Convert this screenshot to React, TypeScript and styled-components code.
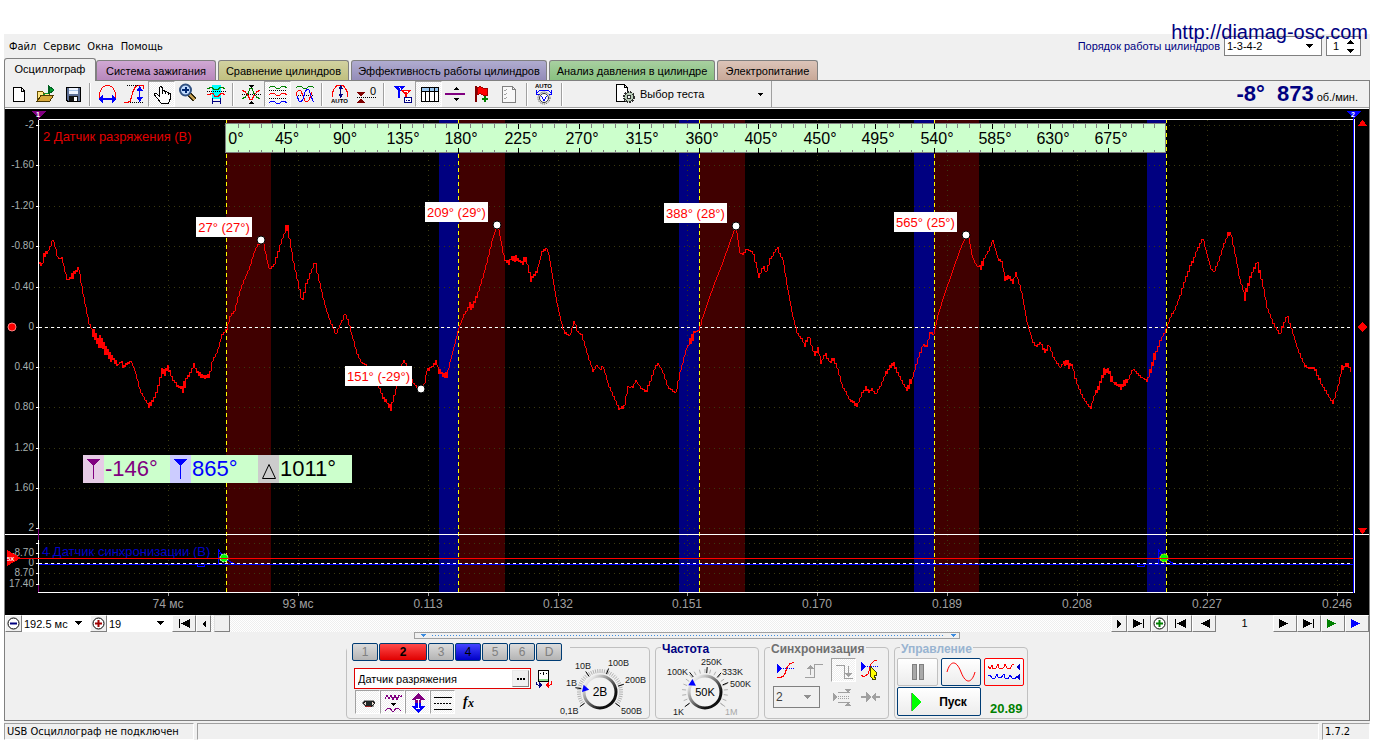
import React, { useState } from "react";
import styled, { createGlobalStyle, css } from "styled-components";

const UI_FONT = '"Liberation Sans", Arial, sans-serif';
const MENU_FONT = '"DejaVu Sans Condensed", "DejaVu Sans", sans-serif';

const GlobalStyle = createGlobalStyle`
  *, *::before, *::after { box-sizing: border-box; }
  body { margin: 0; background: #fff; font: 11px/14px ${UI_FONT}; color: #000; }
  button, input, select { font: inherit; color: inherit; margin: 0; padding: 0; }
  svg { display: block; }
`;

const checker = css`
  background: repeating-conic-gradient(#fff 0 25%, #eee 0 50%) 0 0 / 2px 2px;
`;

/* ---------- window frame ---------- */

const Page = styled.div`
  position: relative;
  padding: 34px 12px 3px 4px;
`;

const SiteLink = styled.a`
  position: absolute;
  top: 20px;
  right: 14px;
  font-size: 20px;
  line-height: 24px;
  color: #000080;
  text-decoration: none;
  z-index: 2;
`;

const Window = styled.main`
  background: #f0f0f0;
`;

const Header = styled.header`
  display: flex;
  justify-content: space-between;
  height: 24px;
`;

const Menu = styled.nav`
  display: flex;
  gap: 7px;
  padding: 6px 0 0 5px;
  font: 11px/14px ${MENU_FONT};
`;

const MenuItem = styled.button`
  border: 0;
  height: 14px;
  background: none;
`;

const OrderBar = styled.div`
  display: flex;
  gap: 4px;
  padding: 2px 9px 0 0;
  height: 22px;
`;

const OrderLabel = styled.label`
  color: #000080;
  padding-top: 3px;
`;

const Combo = styled.span<{ $w: number; $framed?: boolean; $disabled?: boolean }>`
  display: grid;
  grid-template-columns: 1fr 16px;
  align-items: center;
  width: ${(p) => p.$w}px;
  background: ${(p) => (p.$disabled ? "#f0f0f0" : "#fff")};
  border: ${(p) => (p.$framed ? "1px solid #808080" : "0")};
  select {
    grid-area: 1 / 1 / 2 / 3;
    width: 100%;
    height: 100%;
    padding-left: 2px;
    border: 0;
    background: none;
    appearance: none;
    opacity: 1;
  }
  svg {
    grid-area: 1 / 2;
    pointer-events: none;
  }
`;

const Spinner = styled.span`
  display: flex;
  width: 35px;
  background: #fff;
  border: 1px solid #808080;
  input {
    width: 14px;
    flex: 1;
    min-width: 0;
    border: 0;
    background: none;
    padding-left: 6px;
  }
`;

const SpinButtons = styled.span`
  display: flex;
  flex-direction: column;
  justify-content: center;
  gap: 5px;
  width: 18px;
  padding-left: 4px;
  button {
    border: 0;
    background: none;
    height: 5px;
  }
`;

/* ---------- tabs ---------- */

const Tabs = styled.div`
  display: flex;
  align-items: flex-end;
  gap: 2px;
  height: 22px;
`;

const Tab = styled.button<{ $bg: string; $w: number; $active?: boolean }>`
  width: ${(p) => p.$w}px;
  height: ${(p) => (p.$active ? 23 : 20)}px;
  margin: 0 ${(p) => (p.$active ? "-2px -1px 0" : "0 0")};
  padding-bottom: ${(p) => (p.$active ? 2 : 0)}px;
  border: 1px solid #808080;
  border-bottom: 0;
  border-radius: 3px 3px 0 0;
  background: ${(p) => p.$bg};
  white-space: nowrap;
  z-index: ${(p) => (p.$active ? 1 : 0)};
`;

const Body = styled.div`
  border: 1px solid #808080;
`;

/* ---------- toolbar ---------- */

const Toolbar = styled.div`
  display: flex;
  align-items: flex-start;
  height: 28px;
  border-bottom: 1px solid #fff;
  box-shadow: inset 0 -1px #a0a0a0;
`;

const ToolButton = styled.button<{ $pressed?: boolean }>`
  width: 27px;
  height: 26px;
  display: grid;
  place-items: center;
  border: 1px solid transparent;
  background: none;
  ${(p) =>
    p.$pressed &&
    css`
      ${checker}
      border-color: #a0a0a0 #fff #fff #a0a0a0;
    `}
`;

const Separator = styled.span`
  width: 8px;
  height: 26px;
  background: linear-gradient(#a0a0a0, #a0a0a0) 3px 2px / 1px 23px no-repeat,
    linear-gradient(#fff, #fff) 4px 2px / 1px 23px no-repeat;
`;

const TestButton = styled.button`
  display: flex;
  align-items: center;
  gap: 3px;
  width: 206px;
  height: 26px;
  padding: 0 8px 0 49px;
  border: 0;
  border-right: 1px solid #a0a0a0;
  background: none;
  svg:last-child {
    margin-left: auto;
  }
`;

const Readout = styled.output`
  display: flex;
  align-items: baseline;
  gap: 12px;
  margin-left: auto;
  padding-right: 11px;
  font: bold 22px/26px ${UI_FONT};
  color: #000080;
  small {
    margin-left: -9px;
    font: 11px/14px ${UI_FONT};
    color: #000;
  }
`;

/* ---------- chart ---------- */

const ChartSvg = styled.svg`
  width: 100%;
  background: #000;
  font-family: ${UI_FONT};
`;

/* ---------- navigation strip ---------- */

const Strip = styled.div`
  display: flex;
  height: 17px;
  background: #fff;
`;

const StripButton = styled.button<{ $w: number }>`
  width: ${(p) => p.$w}px;
  height: 17px;
  display: grid;
  place-items: center;
  border: 1px solid;
  border-color: #fff #808080 #808080 #fff;
  background: #f0f0f0;
`;

const Track = styled.div`
  ${checker}
  flex: 1;
  display: flex;
  padding-left: 3px;
`;

const Thumb = styled.div`
  width: 16px;
  border: 1px solid;
  border-color: #e0e0e0 #808080 #808080 #e0e0e0;
  background: #f0f0f0;
`;

const PageNumber = styled.span`
  width: 57px;
  background: #f0f0f0;
  text-align: center;
  line-height: 17px;
`;

/* ---------- control panel ---------- */

const Panel = styled.div`
  display: flex;
  flex-direction: column;
  align-items: center;
  height: 88px;
`;

const Splitter = styled.div`
  display: flex;
  align-items: center;
  gap: 6px;
  width: 40%;
  height: 7px;
  padding: 0 3px 0 5px;
  border: 1px solid #a0a0a0;
`;

const SplitterDots = styled.span`
  flex: 1;
  height: 1px;
  background: repeating-linear-gradient(90deg, #3c8ce0 0 1px, transparent 1px 3px);
`;

const Groups = styled.div`
  display: flex;
  gap: 5px;
  margin-top: 8px;
`;

const Group = styled.section<{ $w: number }>`
  width: ${(p) => p.$w}px;
  height: 72px;
  border: 1px solid #c0c0c0;
  border-radius: 4px;
`;

const GroupTitle = styled.h2<{ $color: string }>`
  width: fit-content;
  margin: -5px 0 0 5px;
  padding: 0 1px;
  background: #f0f0f0;
  font: bold 12px/12px ${UI_FONT};
  color: ${(p) => p.$color};
`;

const ChannelGroup = styled(Group)`
  display: flex;
`;

const ChannelColumn = styled.div`
  width: 208px;
`;

const ChannelRow = styled.div`
  display: flex;
  gap: 1px;
  width: 223px;
  margin-top: -5px;
  padding-left: 5px;
  background: #f0f0f0;
`;

const channelFill = { idle: "#dcdcdc, #b4b4b4", red: "#ff4a4a, #e00000", blue: "#4444ff, #0000c8" };

const ChannelButton = styled.button<{ $tone: keyof typeof channelFill; $wide?: boolean }>`
  width: ${(p) => (p.$wide ? 48 : 26)}px;
  height: 18px;
  border: 1px solid #003c74;
  border-radius: 2px;
  background: linear-gradient(${(p) => channelFill[p.$tone]});
  color: ${(p) => (p.$tone === "idle" ? "#808080" : "#000")};
  font-size: 12px;
  font-weight: ${(p) => (p.$tone === "red" ? "bold" : "normal")};
`;

const SensorRow = styled.div`
  display: flex;
  align-items: center;
  gap: 4px;
  padding: 7px 0 0 7px;
`;

const SensorField = styled.span`
  display: flex;
  width: 177px;
  height: 21px;
  padding: 1px;
  border: 1px solid #e00000;
  background: #fff;
  input {
    flex: 1;
    min-width: 0;
    padding-left: 2px;
    border: 0;
    background: none;
  }
`;

const MoreButton = styled.button`
  width: 17px;
  border: 1px solid;
  border-color: #e8e8e8 #808080 #808080 #e8e8e8;
  background: #f0f0f0;
  display: grid;
  place-items: center;
`;

const ViewRow = styled.div`
  display: flex;
  padding: 1px 0 0 8px;
`;

const ViewButton = styled(ToolButton)`
  width: 25px;
  height: 24px;
`;

const SyncGrid = styled.div`
  display: grid;
  grid-template-columns: 29px 29px 28px 24px;
  grid-template-rows: 24px 30px;
  padding: 3px 0 0 8px;
  align-items: center;
`;

const SyncSelect = styled.span`
  grid-column: 1 / 3;
  display: flex;
  height: 22px;
  font-size: 12px;
  color: #404040;
`;

const ControlGrid = styled.div`
  display: grid;
  grid-template-columns: 41px 40px 40px;
  grid-template-rows: 28px 29px;
  gap: 1px 3px;
  padding: 3px 0 0 2px;
`;

const PushButton = styled.button<{ $edge: string; $span?: boolean }>`
  grid-column: ${(p) => (p.$span ? "1 / 3" : "auto")};
  display: flex;
  align-items: center;
  justify-content: center;
  gap: 18px;
  border: 1px solid ${(p) => p.$edge};
  border-radius: 2px;
  background: linear-gradient(#fff, #ececec);
  font-size: 12px;
  font-weight: bold;
`;

const Rate = styled.output`
  align-self: end;
  padding: 0 0 0 6px;
  font: bold 13px/14px ${UI_FONT};
  color: #008000;
`;

/* ---------- status bar ---------- */

const StatusBar = styled.footer`
  display: flex;
  gap: 3px;
  padding-top: 2px;
  font: 11px/14px ${MENU_FONT};
`;

const StatusCell = styled.div<{ $w?: number }>`
  ${(p) => (p.$w ? `width: ${p.$w}px` : "flex: 1")};
  height: 17px;
  padding: 1px 2px;
  border: 1px solid;
  border-color: #a0a0a0 #fff #fff #a0a0a0;
  white-space: nowrap;
`;

/* ---------- icons ---------- */

const Icon = ({ children, w = 24, h = 24 }: { children: React.ReactNode; w?: number; h?: number }) => (
  <svg width={w} height={h} viewBox={`0 0 ${w} ${h}`} fill="none" shapeRendering="crispEdges" aria-hidden="true">
    {children}
  </svg>
);

const Arrow = ({ up, fill = "#000" }: { up?: boolean; fill?: string }) => (
  <Icon w={8} h={5}>
    <path d={up ? "M0 5h8l-4-4z" : "M0 0h8l-4 4z"} fill={fill} />
  </Icon>
);

const tiny = { fontSize: 6, fontWeight: "bold", fill: "#000", fontFamily: UI_FONT } as const;

const icons: Record<string, React.ReactNode> = {
  new: <path d="M6.500 5.500h8l3 3.500v10.500h-11zM14.500 5.500v3.500h3" fill="#fff" stroke="#000" />,
  open: (
    <>
      <path d="M3.500 19V9.500h5l1 1.500h6v3" fill="#ffe888" stroke="#6b5200" />
      <path d="M3 19.500l4-6h12.500l-4 6z" fill="#d9a93a" stroke="#4a3800" />
      <path d="M14.500 3v9M15 4l5 4-5 4z" fill="#00a030" stroke="#006020" />
      <path d="M14 11.500c-2 1-4 0-5 1" stroke="#00a030" />
    </>
  ),
  save: (
    <>
      <path d="M5.500 5.500h13.500v14h-12l-1.500-1.500z" fill="#5f7196" stroke="#000" />
      <path d="M8 6h9v6h-9z" fill="#eef4ff" />
      <path d="M8 8h9" stroke="#a8c4e8" />
      <path d="M8 14h9v5h-9z" fill="#111" />
      <path d="M13 15h3v4h-3z" fill="#fff" />
    </>
  ),
  period: (
    <>
      <path d="M3.500 15.500v-4l1-3 2-3 3-2h4l3 2 2 3 1 3v4" stroke="#f00" />
      <path d="M4 16.500h15M4 17.500h15" stroke="#00f" />
      <path d="M2 17l5-4v8zM21 17l-5-4v8z" fill="#00f" />
    </>
  ),
  amplitude: (
    <>
      <path d="M1 20.500h3l3-1 1-3 2-7 2-4 2-2h6l1 3" stroke="#f00" />
      <path d="M4 3.500h11M7 20.500h14" stroke="#000" strokeDasharray="1 1" />
      <path d="M16.500 6v12" stroke="#00f" />
      <path d="M16.500 4l4 5h-7zM16.500 20l4-5h-7z" fill="#00f" />
    </>
  ),
  hand: (
    <path
      d="M9.500 14V5.500q1-2 2.500 0v6V9.500q1.500-1.500 3 0v2V10q1.500-1 3 .5v2-1q2-1 2.500 1v4l-2 4.500h-7.500l-3-4-3.500-4q0-2 2-1.500z"
      fill="#fff"
      stroke="#000"
    />
  ),
  zoom: (
    <>
      <path d="M12 12l6 6" stroke="#30280c" strokeWidth="5" />
      <path d="M12 12l6 6" stroke="#c8a050" strokeWidth="2" />
      <circle cx="8.500" cy="8" r="5.500" fill="#c0dcff" stroke="#305080" strokeWidth="2" shapeRendering="auto" />
      <path d="M5 8h7M8.500 5v6" stroke="#002870" strokeWidth="2" />
    </>
  ),
  section: (
    <>
      <path d="M8 3h9v14h-9z" fill="#0ff" />
      <path d="M3 6.500h2l1-1h2l2 2h4l2-2h3l1 1h1" stroke="#008000" />
      <path d="M3 9.500h19" stroke="#000" strokeDasharray="1 1" />
      <path d="M3 12.500h3l1-1h2l2 3h3l3-3h2l1 1h1" stroke="#f00" />
      <path d="M8.500 16v6M16.500 16v6M9 19.500h8" stroke="#000080" />
    </>
  ),
  cross: (
    <>
      <path d="M3 16.500l3-1 3-4 2-5h2l2 5 3 4 3 1" stroke="#008000" />
      <path d="M3 8.500l3 1 3 4 2 4h2l2-4 3-4 3-1" stroke="#f00" />
      <path d="M3 12.500h19" stroke="#000" strokeDasharray="1 1" />
      <path d="M9 3h6l-3 3zM9 22h6l-3-3z" fill="#000" />
    </>
  ),
  stacked: (
    <>
      <path d="M3 6l2-1.500h3l3 2h2l3-2h3l2 1.500" stroke="#008000" />
      <path d="M3 8.500h18M3 16.500h18" stroke="#000" strokeDasharray="1 1" />
      <path d="M3 13l2-1.500h3l3 2h2l3-2h3l2 1.500" stroke="#f00" />
      <path d="M3 21l2-1.500h3l3 2h2l3-2h3l2 1.500" stroke="#00f" />
    </>
  ),
  overlay: (
    <>
      <path d="M3 5.500l2-1h3l3 2h2l3-2h3l2 1" stroke="#008000" />
      <path d="M3 13.500h18" stroke="#000" strokeDasharray="1 1" />
      <path d="M3 14l1-4 2-2 2 1 2 5 2 5 2 1 2-2 2-5 1-3" stroke="#f00" />
      <path d="M4 14l2 5 2 1 2-3 2-7 2-3 2 1 2 6 2 5h1" stroke="#00f" />
    </>
  ),
  autoAmp: (
    <>
      <path d="M4.500 15v-4l1-3 3-4 2-1h3l2 1 3 4 1 3v4" stroke="#f00" />
      <path d="M12.500 5v9" stroke="#000080" />
      <path d="M12.500 3l3 4h-5zM12.500 16l3-4h-5z" fill="#000080" />
      <text x="3" y="21" {...tiny}>AUTO</text>
    </>
  ),
  zero: (
    <>
      <path d="M2 10h8l-4 5zM2 21h8l-4-5z" fill="#800000" />
      <path d="M2 15.500h19" stroke="#000" strokeDasharray="1 1" />
      <text x="15" y="13" fontSize="11" fill="#000" fontFamily={UI_FONT}>0</text>
    </>
  ),
  cursors: (
    <>
      <path d="M3 4h12l-6 6zM8 8h2v8h-2z" fill="#00f" />
      <path d="M10 8h11l-5 5zM15 12h2v6h-2z" fill="#f00" />
      <path d="M9 5l1 1v2M14 9h3v2" stroke="#fff" />
      <path d="M14.500 15.500h7v5h-7z" fill="#fff" stroke="#000080" />
      <path d="M16 18.500h1M18 18.500h2" stroke="#000080" />
    </>
  ),
  table: (
    <>
      <path d="M4.500 5.500h17v14h-17z" fill="#fff" stroke="#000" />
      <path d="M5 6h16v3h-16z" fill="#9cc8f0" />
      <path d="M5 9.500h16M8.500 9v10M12.500 6v13M17.500 6v13" stroke="#000" />
    </>
  ),
  level: (
    <>
      <path d="M1 12h20" stroke="#800080" strokeWidth="2" />
      <path d="M9 8h6l-3-3zM9 16h6l-3 3z" fill="#000" />
    </>
  ),
  flag: (
    <>
      <path d="M4 4h2v16h-2z" fill="#800000" />
      <path d="M6.500 5.500l3-1 3 2h4v7h-4l-3-2-3 1z" fill="#f00" stroke="#a00000" />
      <path d="M11 17h6M14 14v6" stroke="#008000" strokeWidth="2" />
    </>
  ),
  report: (
    <>
      <path d="M4.500 4.500h10l3 3v13h-13z" fill="#f8f8f8" stroke="#808080" />
      <path d="M14.500 4.500v3h3" stroke="#808080" />
      <path d="M6 8l1 1 2-2M6 12l1 1 2-2M6 16l1 1 2-2" stroke="#a0a0a0" />
    </>
  ),
  autoKnob: (
    <>
      <text x="2" y="6" {...tiny}>AUTO</text>
      <path d="M4 10.500l3-2h8l3 2M3.500 8v4h3M18.500 8v4h-3" stroke="#00f" />
      <circle cx="11" cy="16" r="6" stroke="#404040" strokeDasharray="1 1" shapeRendering="auto" />
      <circle cx="11" cy="16" r="4.500" fill="#fff" stroke="#303030" shapeRendering="auto" />
      <path d="M8.500 14l2.500 5 2.500-5" stroke="#00f" />
    </>
  ),
};

const toolGroups: { name: string; title: string; pressed?: boolean }[][] = [
  [
    { name: "new", title: "Новый" },
    { name: "open", title: "Открыть" },
    { name: "save", title: "Сохранить" },
  ],
  [
    { name: "period", title: "Период" },
    { name: "amplitude", title: "Амплитуда" },
    { name: "hand", title: "Рука", pressed: true },
    { name: "zoom", title: "Масштаб" },
    { name: "section", title: "Участок" },
  ],
  [
    { name: "cross", title: "Совместить" },
    { name: "stacked", title: "Раздельно", pressed: true },
    { name: "overlay", title: "Наложение" },
  ],
  [
    { name: "autoAmp", title: "Автоамплитуда" },
    { name: "zero", title: "Ноль" },
  ],
  [
    { name: "cursors", title: "Маркеры" },
    { name: "table", title: "Таблица", pressed: true },
    { name: "level", title: "Уровень" },
    { name: "flag", title: "Закладка" },
    { name: "report", title: "Отчёт" },
  ],
  [{ name: "autoKnob", title: "Автонастройка" }],
];

/* ---------- signal data ---------- */

// x, y, noise amplitude
const signal: number[][] = [
  [39, 262, 2], [42, 266, 2], [44, 255, 2], [48, 252, 1], [53, 239, 1], [58, 258, 1], [62, 258, 1], [67, 280, 1],
  [72, 277, 3], [75, 273, 3], [79, 269, 2], [83, 293, 1], [89, 323, 1], [93, 332, 5], [97, 340, 7], [103, 343, 7],
  [108, 354, 4], [113, 358, 3], [117, 365, 1], [121, 362, 2], [124, 367, 2], [128, 363, 1], [131, 361, 0], [135, 370, 1],
  [140, 390, 1], [144, 398, 1], [149, 406, 2], [153, 401, 2], [157, 391, 2], [162, 372, 3], [165, 372, 3], [168, 367, 2],
  [173, 380, 2], [178, 386, 2], [183, 389, 4], [187, 377, 2], [191, 372, 2], [194, 365, 2], [198, 373, 2], [202, 377, 2],
  [209, 376, 2], [213, 360, 1], [218, 350, 1], [222, 335, 1], [227, 329, 1], [230, 317, 1], [235, 310, 1], [238, 297, 1],
  [243, 283, 1], [250, 267, 1], [255, 250, 1], [261, 240, 0], [264, 245, 1], [268, 265, 1], [270, 269, 2], [274, 265, 2],
  [278, 253, 2], [282, 240, 1], [286, 229, 3], [288, 228, 3], [290, 240, 1], [293, 260, 1], [298, 282, 3], [302, 299, 3],
  [307, 283, 2], [312, 270, 1], [315, 261, 2], [319, 280, 1], [325, 305, 1], [330, 321, 1], [336, 334, 1], [340, 325, 1],
  [345, 314, 1], [348, 320, 1], [352, 335, 1], [357, 353, 1], [362, 363, 1], [370, 367, 1], [375, 375, 1], [379, 387, 1],
  [383, 397, 2], [391, 408, 2], [396, 390, 1], [400, 370, 1], [404, 360, 1], [408, 368, 1], [413, 382, 1], [417, 387, 1],
  [421, 389, 0], [425, 382, 1], [427, 370, 2], [430, 369, 2], [436, 361, 1], [439, 371, 3], [447, 376, 2], [450, 363, 1],
  [455, 343, 1], [459, 328, 0], [463, 317, 1], [469, 306, 3], [473, 306, 2], [478, 293, 1], [483, 277, 1], [488, 258, 1],
  [493, 238, 0], [497, 226, 0], [499, 230, 0], [502, 247, 1], [505, 260, 1], [508, 264, 3], [512, 258, 3], [518, 259, 3],
  [523, 263, 4], [526, 258, 2], [531, 279, 2], [537, 272, 1], [542, 252, 1], [547, 249, 0], [549, 255, 0], [552, 273, 0],
  [557, 303, 0], [562, 325, 1], [565, 333, 1], [570, 336, 1], [574, 321, 1], [578, 332, 1], [582, 335, 1], [587, 353, 1],
  [593, 371, 1], [597, 365, 0], [600, 370, 1], [603, 366, 1], [608, 383, 1], [613, 395, 1], [619, 409, 1], [624, 407, 2],
  [628, 387, 1], [633, 387, 1], [636, 380, 0], [640, 387, 1], [646, 392, 3], [650, 382, 2], [655, 368, 2], [658, 363, 0],
  [663, 372, 1], [668, 387, 1], [676, 393, 2], [680, 373, 1], [687, 347, 1], [690, 343, 4], [695, 332, 1], [699, 330, 2],
  [703, 317, 0], [708, 302, 0], [715, 282, 0], [723, 262, 0], [730, 242, 0], [736, 226, 0], [738, 240, 0], [740, 253, 1],
  [743, 254, 1], [747, 249, 1], [753, 252, 2], [757, 268, 0], [759, 277, 1], [763, 266, 2], [766, 272, 2], [771, 258, 1],
  [777, 248, 2], [783, 260, 1], [788, 290, 0], [793, 317, 1], [797, 332, 1], [801, 338, 1], [805, 345, 2], [809, 336, 1],
  [812, 347, 1], [815, 355, 2], [818, 348, 2], [821, 363, 1], [825, 354, 2], [830, 362, 2], [834, 359, 2], [838, 370, 1],
  [842, 385, 1], [849, 398, 2], [857, 407, 1], [862, 393, 1], [866, 389, 2], [869, 393, 1], [872, 389, 1], [876, 394, 1],
  [881, 385, 1], [886, 373, 2], [893, 363, 2], [899, 375, 1], [904, 385, 1], [907, 389, 3], [912, 380, 1], [917, 362, 2],
  [923, 345, 1], [927, 346, 2], [930, 333, 1], [934, 334, 0], [938, 315, 0], [945, 293, 0], [953, 270, 0], [960, 250, 0],
  [966, 236, 0], [969, 238, 0], [972, 255, 1], [976, 265, 1], [980, 267, 4], [985, 257, 1], [990, 248, 1], [993, 240, 0],
  [998, 259, 1], [1002, 261, 1], [1005, 279, 2], [1009, 276, 2], [1013, 283, 1], [1016, 273, 1], [1022, 293, 0], [1027, 322, 0],
  [1033, 342, 1], [1037, 347, 1], [1041, 342, 2], [1045, 352, 2], [1049, 345, 1], [1054, 358, 1], [1060, 367, 1], [1065, 361, 5],
  [1069, 366, 2], [1072, 365, 2], [1077, 383, 1], [1083, 398, 1], [1091, 408, 1], [1095, 393, 2], [1099, 387, 3], [1104, 370, 4],
  [1108, 371, 4], [1114, 383, 2], [1121, 387, 4], [1127, 382, 1], [1133, 369, 1], [1139, 375, 1], [1147, 381, 2], [1150, 372, 5],
  [1156, 353, 2], [1162, 337, 1], [1166, 330, 1], [1171, 316, 1], [1175, 310, 1], [1181, 293, 2], [1187, 275, 2], [1196, 253, 1],
  [1203, 238, 1], [1206, 250, 0], [1211, 269, 1], [1214, 272, 1], [1218, 263, 1], [1223, 247, 1], [1228, 234, 2], [1231, 233, 2],
  [1235, 253, 1], [1240, 280, 1], [1245, 296, 4], [1250, 278, 2], [1257, 262, 3], [1262, 280, 1], [1267, 307, 1], [1273, 323, 1],
  [1280, 334, 2], [1287, 315, 2], [1292, 330, 1], [1298, 350, 1], [1305, 366, 1], [1315, 369, 2], [1321, 383, 1], [1333, 403, 1],
  [1338, 387, 2], [1342, 368, 2], [1348, 364, 2], [1352, 374, 2],
];

// Adds alternating jitter between the key points so the line looks sampled.
const buildTrace = () => {
  const out: string[] = [];
  let seed = 7;
  for (let i = 0; i < signal.length - 1; i++) {
    const [x0, y0, n] = signal[i];
    const [x1, y1] = signal[i + 1];
    for (let x = x0; x < x1; x++) {
      seed = (seed * 1103515245 + 12345) % 2147483648;
      const r = 0.3 + (seed / 2147483648) * 1.1;
      const side = x % 2 ? 1 : -1;
      const y = y0 + ((y1 - y0) * (x - x0)) / (x1 - x0) + side * r * n;
      out.push(`${x},${Math.round(y)}`);
    }
  }
  return out.join(" ");
};

const trace = buildTrace();

const strokes = [226, 458, 699, 934, 1166];
const redBands = [[226, 45], [459, 46], [699, 46], [934, 45]];
const blueBands = [[439, 20], [679, 20], [914, 20], [1147, 19]];

const levels: [number, string][] = [
  [125, "-2"], [165, "-1.60"], [206, "-1.20"], [246, "-0.80"], [287, "-0.40"], [327, "0"],
  [367, "0.40"], [407, "0.80"], [448, "1.20"], [488, "1.60"], [528, "2"],
  [543, ""], [553, "-8.70"], [563, "0"], [573, "8.70"], [584, "17.40"],
];

const times: [number, string][] = [
  [168, "74 мс"], [298, "93 мс"], [428, "0.113"], [558, "0.132"], [687, "0.151"],
  [817, "0.170"], [947, "0.189"], [1077, "0.208"], [1207, "0.227"], [1337, "0.246"],
];

const callouts: [number, number, number, string, number, number][] = [
  [196, 217, 56, "27° (27°)", 261, 240],
  [345, 366, 67, "151° (-29°)", 421, 389],
  [425, 202, 63, "209° (29°)", 497, 225],
  [664, 203, 63, "388° (28°)", 736, 226],
  [894, 212, 63, "565° (25°)", 966, 235],
];

const Ruler = () => {
  const marks = [];
  for (let k = 0; k < 80; k++) {
    const seg = Math.floor(k / 20);
    const x = Math.round(strokes[seg] + ((strokes[seg + 1] - strokes[seg]) * (k % 20)) / 20);
    const major = k % 5 === 0;
    if (k > 0) {
      marks.push(
        <g key={k} fill={major ? "#000" : "#808080"}>
          <rect x={x} y={124} width="1" height={major ? 5 : 4} />
          <rect x={x} y={major ? 148 : 150} width="1" height={major ? 5 : 3} />
        </g>
      );
    }
    if (major) {
      marks.push(
        <text key={`t${k}`} x={k ? x + 3 : 236} y="144" fontSize="16" textAnchor="middle">
          {k * 9}°
        </text>
      );
    }
  }
  return (
    <g>
      <rect x="225" y="123" width="941" height="30" fill="#808080" />
      <rect x="226" y="124" width="939" height="28" fill="#ccffcc" />
      {marks}
    </g>
  );
};

const Dot = ({ x, y }: { x: number; y: number }) => (
  <circle cx={x} cy={y} r="4" fill="#fff" stroke="#000" shapeRendering="auto" />
);

const Measure = ({ x, w, bg, color, text, delta }: { x: number; w: number; bg: string; color: string; text: string; delta?: boolean }) => (
  <g>
    <rect x={x} y="455" width={w} height="28" fill="#ccffcc" />
    <rect x={x} y="455" width="21" height="28" fill={bg} />
    {delta ? (
      <path d={`M${x + 4}.5 478.500h13l-6.500-14z`} fill="none" stroke={color} shapeRendering="auto" />
    ) : (
      <path d={`M${x + 3} 459h15l-7 6v14h-1v-14z`} fill={color} />
    )}
    <text x={x + 22} y="476" fontSize="22" fill={color}>{text}</text>
  </g>
);

const SyncPulse = ({ x }: { x: number }) => (
  <path d={`M${x - 21}.5 564v2.500h7v-2h14v-15l5 8 6 4 6 3`} fill="none" stroke="#00f" />
);

const Chart = () => (
  <ChartSvg viewBox="5 109 1364 506" shapeRendering="crispEdges" role="img" aria-label="Осциллограмма">
    {redBands.map(([x, w]) => <rect key={x} x={x} y="120" width={w} height="472" fill="#400000" />)}
    {blueBands.map(([x, w]) => <rect key={x} x={x} y="120" width={w} height="472" fill="#000080" />)}
    <g stroke="#3a3a10" strokeDasharray="1 4">
      {levels.map(([y], i) => <path key={i} d={`M39 ${y}.5H1353`} />)}
      {times.map(([x]) => <path key={x} d={`M${x}.5 120V592`} />)}
    </g>
    {strokes.map((x) => <path key={x} d={`M${x}.5 119V592`} stroke="#ff0" strokeDasharray="4 3" />)}
    <path d="M39 327.500H1353" stroke="#fff" strokeDasharray="3 3" />
    <polyline points={trace} fill="none" stroke="#f00" />

    <text x="43" y="141" fontSize="13" fill="#e00000">2 Датчик разряжения (В)</text>
    <text x="42" y="556" fontSize="13" fill="#0000c8">4 Датчик синхронизации (В)</text>
    <path d="M39 564.500H1353" stroke="#00f" />
    <SyncPulse x={218} />
    <SyncPulse x={1158} />
    <path d="M39 563.500H1353" stroke="#fff" strokeDasharray="3 3" />
    <circle cx="224" cy="558" r="4" fill="#0f0" stroke="#fff" strokeDasharray="2 1" shapeRendering="auto" />
    <circle cx="1164" cy="558" r="4" fill="#0f0" stroke="#ff0" strokeDasharray="2 1" shapeRendering="auto" />

    <g fill="#fff">
      <rect x="38" y="119" width="1316" height="1" />
      <rect x="38" y="119" width="1" height="474" />
      <rect x="1354" y="119" width="1" height="474" />
      <rect x="38" y="592" width="1317" height="1" />
      <rect x="5" y="534" width="1364" height="1" />
      {levels.map(([y], i) => <rect key={i} x="36" y={y} width="2" height="1" />)}
    </g>
    <rect x="1353" y="119" width="1" height="474" fill="#00f" />
    <g fill="#800080">
      <rect x="38" y="529" width="1" height="11" />
      <rect x="38" y="585" width="1" height="7" />
    </g>
    {times.map(([x, t]) => (
      <g key={x} fill="#a0a0a0">
        <rect x={x} y="593" width="1" height="3" />
        <text x={x} y="608" fontSize="12" textAnchor="middle">{t}</text>
      </g>
    ))}
    <g fontSize="10" fill="#a8b0b0" textAnchor="end">
      {levels.map(([y, t], i) => <text key={i} x="34" y={y + 3}>{t}</text>)}
    </g>

    <rect x="20" y="558" width="1333" height="1" fill="#f00" />
    <path d="M7 550l14 8-14 8z" fill="#f00" />
    <text x="7" y="561" fontSize="6" fontWeight="bold" fill="#fff">5X</text>
    <circle cx="12" cy="327" r="4" fill="#f00" stroke="#ff8080" shapeRendering="auto" />
    <path d="M31 111h15l-7 7v2h-1v-2z" fill="#800080" />
    <path d="M1346 111h15l-7 7v2h-1v-2z" fill="#00f" />
    <g fontSize="7" fontWeight="bold" fill="#fff" textAnchor="middle">
      <text x="38" y="117">1</text>
      <text x="1353" y="117">2</text>
    </g>
    <path d="M1358 126h9l-4-6h-1zM1358 528h9l-4 6h-1zM1362 322l5 5-5 5-5-5z" fill="#f00" />

    <Ruler />
    {callouts.map(([x, y, w, t, dx, dy]) => (
      <g key={t}>
        <rect x={x} y={y} width={w} height="20" fill="#fff" />
        <text x={x + w / 2} y={y + 15} fontSize="13" fill="#f00" textAnchor="middle">{t}</text>
        <Dot x={dx} y={dy} />
      </g>
    ))}
    <Measure x={83} w={87} bg="#e6cce6" color="#800080" text="-146°" />
    <Measure x={170} w={88} bg="#ccccff" color="#0000ff" text="865°" />
    <Measure x={258} w={94} bg="#cccccc" color="#000000" text="1011°" delta />
  </ChartSvg>
);

/* ---------- knobs ---------- */

type KnobLabel = { x: number; y: number; t: string; dim?: boolean; a: number };

const polar = (cx: number, cy: number, r: number, deg: number) => {
  const a = (deg * Math.PI) / 180;
  return `${(cx + r * Math.cos(a)).toFixed(1)} ${(cy - r * Math.sin(a)).toFixed(1)}`;
};

const Knob = ({ id, w, h, cx, cy, step, pointer, value, size, labels }: {
  id: string; w: number; h: number; cx: number; cy: number; step: number; pointer: number; value: string; size: number; labels: KnobLabel[];
}) => {
  const ticks: number[] = [];
  for (let a = -36; a <= 216; a += step) ticks.push(a);
  return (
    <svg width={w} height={h} viewBox={`0 0 ${w} ${h}`} role="img" aria-label={value} fontFamily={UI_FONT}>
      <defs>
        <linearGradient id={id} x1="0" y1="0" x2="1" y2="1">
          <stop offset="0.15" stopColor="#e8e8e8" />
          <stop offset="0.75" stopColor="#101010" />
        </linearGradient>
      </defs>
      {ticks.map((a) => (
        <path key={a} d={`M${polar(cx, cy, 19, a)}L${polar(cx, cy, 23, a)}`} stroke="#b0b0b0" />
      ))}
      {labels.map((l) => (
        <path key={l.t} d={`M${polar(cx, cy, 19, l.a)}L${polar(cx, cy, 25, l.a)}`} stroke={l.dim ? "#b0b0b0" : "#000"} />
      ))}
      <circle cx={cx} cy={cy} r="16" fill="#f2f2f2" stroke={`url(#${id})`} strokeWidth="3" />
      <path
        d={`M${polar(cx, cy, 18, pointer - 12)}L${polar(cx, cy, 18, pointer + 12)}L${polar(cx, cy, 11, pointer)}z`}
        fill="#00f"
      />
      <text x={cx} y={cy + 4} fontSize={size} textAnchor="middle">{value}</text>
      {labels.map((l) => (
        <text key={l.t} x={l.x} y={l.y} fontSize="9" fill={l.dim ? "#a8a8a8" : "#202020"}>{l.t}</text>
      ))}
    </svg>
  );
};

const voltLabels: KnobLabel[] = [
  { x: 20, y: 21, t: "10В", a: 125 }, { x: 53, y: 18, t: "100В", a: 70 }, { x: 70, y: 35, t: "200В", a: 18 },
  { x: 11, y: 38, t: "1В", a: 170 }, { x: 5, y: 66, t: "0,1В", a: 216 }, { x: 66, y: 66, t: "500В", a: -36 },
];

const freqLabels: KnobLabel[] = [
  { x: 45, y: 10, t: "250K", a: 85 }, { x: 11, y: 20, t: "100K", a: 128 }, { x: 66, y: 20, t: "333K", a: 50 },
  { x: 74, y: 32, t: "500K", a: 22 }, { x: 17, y: 60, t: "1K", a: 216 }, { x: 69, y: 60, t: "1M", a: -36, dim: true },
];

/* ---------- app ---------- */

const tabs = [
  { t: "Осциллограф", w: 92, bg: "#f0f0f0" },
  { t: "Система зажигания", w: 120, bg: "linear-gradient(#d0a8d4, #b888bc)" },
  { t: "Сравнение цилиндров", w: 131, bg: "linear-gradient(#d2d2a0, #c0c080)" },
  { t: "Эффективность работы цилиндров", w: 196, bg: "linear-gradient(#b0acd0, #948cb8)" },
  { t: "Анализ давления в цилиндре", w: 166, bg: "linear-gradient(#a8d0a0, #88c080)" },
  { t: "Электропитание", w: 101, bg: "linear-gradient(#dcc4b8, #c8a898)" },
];

const channels = ["1", "2", "3", "4", "5", "6", "D"];

const play = "M0 0l9 4.500-9 4.500z";

const StripIcon = ({ back, bar, fill = "#000" }: { back?: boolean; bar?: boolean; fill?: string }) => (
  <Icon w={12} h={9}>
    <g transform={back ? "translate(12 0) scale(-1 1)" : undefined} fill={fill}>
      <path d={play} />
      {bar && <rect x="10" width="1" height="9" />}
    </g>
  </Icon>
);

const RoundSign = ({ plus, color }: { plus?: boolean; color: string }) => (
  <svg width="13" height="13" viewBox="0 0 13 13" fill="none" aria-hidden="true">
    <circle cx="6.500" cy="6.500" r="5.500" fill="#fff" stroke="#000" />
    <path d={plus ? "M3 6.500h7M6.500 3v7" : "M3 6.500h7"} stroke={color} strokeWidth="2" />
  </svg>
);

export default function App() {
  const [sensor, setSensor] = useState("Датчик разряжения");
  const [cyl, setCyl] = useState("1");
  return (
    <Page>
      <GlobalStyle />
      <SiteLink href="http://diamag-osc.com">http://diamag-osc.com</SiteLink>
      <Window>
        <Header>
          <Menu>
            {["Файл", "Сервис", "Окна", "Помощь"].map((m) => <MenuItem key={m}>{m}</MenuItem>)}
          </Menu>
          <OrderBar>
            <OrderLabel htmlFor="order">Порядок работы цилиндров</OrderLabel>
            <Combo $w={98} $framed>
              <select id="order"><option>1-3-4-2</option></select>
              <Arrow />
            </Combo>
            <Spinner>
              <input aria-label="Цилиндр" value={cyl} onChange={(e) => setCyl(e.target.value)} />
              <SpinButtons>
                <button aria-label="Больше"><Arrow up /></button>
                <button aria-label="Меньше"><Arrow /></button>
              </SpinButtons>
            </Spinner>
          </OrderBar>
        </Header>

        <Tabs role="tablist">
          {tabs.map((t, i) => (
            <Tab key={t.t} role="tab" aria-selected={i === 0} $active={i === 0} $w={t.w} $bg={t.bg}>{t.t}</Tab>
          ))}
        </Tabs>

        <Body>
          <Toolbar>
            {toolGroups.map((group, g) => (
              <React.Fragment key={g}>
                {group.map((b) => (
                  <ToolButton key={b.name} aria-label={b.title} $pressed={b.pressed}>
                    <Icon>{icons[b.name]}</Icon>
                  </ToolButton>
                ))}
                <Separator />
              </React.Fragment>
            ))}
            <TestButton>
              <Icon w={22} h={22}>
                <path d="M1.500 1.500h8l3 3v14h-11zM9.500 1.500v3h3" fill="#fff" stroke="#000" />
                <circle cx="14" cy="14" r="5" fill="#b8ccb8" stroke="#303030" strokeWidth="2" strokeDasharray="2 1" />
                <circle cx="14" cy="14" r="2" fill="#fff" stroke="#303030" />
              </Icon>
              Выбор теста
              <Icon w={6} h={3}><path d="M0 0h6l-3 3z" fill="#000" /></Icon>
            </TestButton>
            <Readout>
              <span>-8°</span>
              <span>873</span>
              <small>об./мин.</small>
            </Readout>
          </Toolbar>

          <Chart />

          <Strip>
            <StripButton $w={17} aria-label="Сжать"><RoundSign color="#000080" /></StripButton>
            <Combo $w={68}>
              <select aria-label="Развёртка"><option>192.5 мс</option></select>
              <Arrow />
            </Combo>
            <StripButton $w={17} aria-label="Растянуть"><RoundSign plus color="#a00000" /></StripButton>
            <Combo $w={65}>
              <select aria-label="Деление"><option>19</option></select>
              <Arrow />
            </Combo>
            <StripButton $w={24} aria-label="В начало"><StripIcon back bar /></StripButton>
            <StripButton $w={15} aria-label="Назад"><Icon w={4} h={8}><path d="M4 0v8l-4-4z" fill="#000" /></Icon></StripButton>
            <Track><Thumb /></Track>
            <StripButton $w={16} aria-label="Вперёд"><Icon w={4} h={8}><path d="M0 0v8l4-4z" fill="#000" /></Icon></StripButton>
            <StripButton $w={24} aria-label="В конец"><StripIcon bar /></StripButton>
            <StripButton $w={17} aria-label="Добавить"><RoundSign plus color="#008000" /></StripButton>
            <StripButton $w={24} aria-label="Первый кадр"><StripIcon back bar /></StripButton>
            <StripButton $w={24} aria-label="Предыдущий кадр"><StripIcon back /></StripButton>
            <PageNumber>1</PageNumber>
            <StripButton $w={24} aria-label="Следующий кадр"><StripIcon /></StripButton>
            <StripButton $w={24} aria-label="Последний кадр"><StripIcon bar /></StripButton>
            <StripButton $w={24} aria-label="Воспроизвести"><StripIcon fill="#008000" /></StripButton>
            <StripButton $w={24} aria-label="Воспроизвести всё"><StripIcon fill="#0000ff" /></StripButton>
          </Strip>

          <Panel>
            <Splitter>
              <Icon w={6} h={3}><path d="M0 0h6l-3 3z" fill="#3c8ce0" /></Icon>
              <SplitterDots />
              <Icon w={6} h={3}><path d="M0 0h6l-3 3z" fill="#3c8ce0" /></Icon>
            </Splitter>
            <Groups>
              <ChannelGroup $w={304} aria-label="Каналы">
                <ChannelColumn>
                  <ChannelRow>
                    {channels.map((c) => (
                      <ChannelButton key={c} $wide={c === "2"} $tone={c === "2" ? "red" : c === "4" ? "blue" : "idle"}>
                        {c}
                      </ChannelButton>
                    ))}
                  </ChannelRow>
                  <SensorRow>
                    <SensorField>
                      <input aria-label="Датчик" value={sensor} onChange={(e) => setSensor(e.target.value)} />
                      <MoreButton aria-label="Выбрать датчик">
                        <Icon w={8} h={2}><path d="M0 1h2M3 1h2M6 1h2" stroke="#000" strokeWidth="2" /></Icon>
                      </MoreButton>
                    </SensorField>
                    <Icon w={18} h={18}>
                      <path d="M3.500 0.500h10v11h-10z" fill="#fff" stroke="#000" />
                      <path d="M4 9h9v2h-9z" fill="#90e090" />
                      <path d="M5 4l1-1M8 2v3M11 3l1 1" stroke="#000" />
                      <path d="M1.500 12v2l2 1.500h2M16.500 12v2l-2 1.500h-2" stroke="#000080" />
                      <path d="M4 12l3 3-3 3z" fill="#000080" />
                      <path d="M16.500 11v3l-2 1.500h-2" stroke="#f00" />
                      <path d="M14 12l-4 3 4 3z" fill="#f00" />
                    </Icon>
                  </SensorRow>
                  <ViewRow>
                    <ViewButton $pressed aria-label="Видимость">
                      <Icon>
                        <path d="M6 11l3-2h8l2 2-1 5h-8l-3-2z" fill="#999" />
                        <path d="M7 12l3-2h6l3 2-3 3h-6z" fill="#e8d8d0" stroke="#202020" />
                        <circle cx="13" cy="13" r="3" fill="#202828" />
                        <path d="M9 15.500h6" stroke="#a02020" />
                      </Icon>
                    </ViewButton>
                    <ViewButton $pressed aria-label="Фильтр">
                      <Icon>
                        <path d="M4 8l2-4 2 4 2-4 2 5 2-5 2 5 2-5 2 2 1-2" stroke="#800080" />
                        <path d="M9 12h6l-3 3z" fill="#000" />
                        <path d="M4 20l3-3h2l2 3h2l2-3h2l3 3" stroke="#800080" />
                      </Icon>
                    </ViewButton>
                    <ViewButton $pressed aria-label="Смещение">
                      <Icon>
                        <path d="M12 2l7 7h-4v3h-6v-3h-4z" fill="#800080" />
                        <path d="M12 22l7-7h-4v-3h-6v3h-4z" fill="#00f" />
                        <path d="M12 8v9M10 8h4M10 17h4" stroke="#fff" />
                      </Icon>
                    </ViewButton>
                    <ViewButton $pressed aria-label="Линии">
                      <Icon>
                        <path d="M3 6.500h18M3 18.500h18" stroke="#000" />
                        <path d="M3 12.500h18" stroke="#000" strokeDasharray="2 1" />
                      </Icon>
                    </ViewButton>
                    <ViewButton aria-label="Функция">
                      <Icon>
                        <text x="7" y="15" fontSize="14" fontWeight="bold" fontStyle="italic" fill="#000" fontFamily='"Liberation Serif", serif'>f</text>
                        <text x="12" y="16" fontSize="12" fontWeight="bold" fontStyle="italic" fill="#000" fontFamily='"Liberation Serif", serif'>x</text>
                      </Icon>
                    </ViewButton>
                  </ViewRow>
                </ChannelColumn>
                <Knob id="ringV" w={94} h={70} cx={45} cy={44} step={6} pointer={168} value="2В" size={12} labels={voltLabels} />
              </ChannelGroup>

              <Group $w={104}>
                <GroupTitle $color="#000080">Частота</GroupTitle>
                <Knob id="ringF" w={102} h={63} cx={49} cy={37} step={14} pointer={146} value="50K" size={11} labels={freqLabels} />
              </Group>

              <Group $w={125}>
                <GroupTitle $color="#707070">Синхронизация</GroupTitle>
                <SyncGrid>
                  <Icon>
                    <path d="M4 19.500h3l3-1 2-3 2-6 3-4 4-1" stroke="#f00" />
                    <path d="M8 10.500h13" stroke="#00f" strokeDasharray="1 1" />
                    <path d="M4 6l5 5-5 4z" fill="#00f" />
                  </Icon>
                  <Icon>
                    <path d="M3 19.500h9.500v-13h8" stroke="#a0a0a0" />
                    <path d="M8.500 8v9" stroke="#a0a0a0" />
                    <path d="M8 7l4 4h-7z" fill="#a0a0a0" />
                  </Icon>
                  <ViewButton as="span" $pressed>
                    <Icon>
                      <path d="M4 6.500h8.500v13h8M16.500 7v8" stroke="#a0a0a0" />
                      <path d="M16 18l4-4h-7z" fill="#a0a0a0" />
                    </Icon>
                  </ViewButton>
                  <Icon>
                    <path d="M2 17l3 2 4-3 3-10 4-4h2" stroke="#f00" />
                    <path d="M6 8.500h14" stroke="#00f" strokeDasharray="1 1" />
                    <path d="M2 4l5 4-5 5z" fill="#00f" />
                    <path d="M11.500 8.500l6 6v3l-2 .5 1 3h-3l-2-3z" fill="#ff0" stroke="#404000" />
                  </Icon>
                  <SyncSelect>
                    <Combo $w={47} $framed $disabled>
                      <select aria-label="Канал синхронизации"><option>2</option></select>
                      <Arrow fill="#909090" />
                    </Combo>
                  </SyncSelect>
                  <Icon>
                    <path d="M7 7.500h12M7 17.500h12" stroke="#a0a0a0" />
                    <path d="M7 11.500h12M7 13.500h12" stroke="#a0a0a0" strokeDasharray="1 1" />
                    <path d="M2 8l5 4-5 4zM13 4h7l-3 4zM13 21h7l-3-4z" fill="#a0a0a0" />
                  </Icon>
                  <Icon>
                    <path d="M2 11h5v-4l5 5-5 5v-4h-5zM21 11h-4v-4l-5 5 5 5v-4h4z" fill="#a0a0a0" />
                  </Icon>
                </SyncGrid>
              </Group>

              <Group $w={134}>
                <GroupTitle $color="#99b4d1">Управление</GroupTitle>
                <ControlGrid>
                  <PushButton $edge="#c0c0c0" aria-label="Пауза" disabled>
                    <Icon w={12} h={16}>
                      <path d="M0.500 0.500h4v15h-4zM7.500 0.500h4v15h-4z" fill="#a8a8a8" stroke="#808080" />
                    </Icon>
                  </PushButton>
                  <PushButton $edge="#003c74" aria-label="Один канал">
                    <svg width="30" height="20" viewBox="0 0 30 20" fill="none" aria-hidden="true">
                      <path d="M1 10c3-11 9-13 14 0s11 11 14 0" stroke="#f00" />
                    </svg>
                  </PushButton>
                  <PushButton $edge="#f00" aria-label="Все каналы">
                    <Icon w={34} h={20}>
                      <path d="M1 4l2 3 2-4 1 4 3-1 2-4 1 4 3 1 2-2 1-3 2 4 3 1 2-4 2-1" stroke="#f00" />
                      <path d="M1 14l2-1 2 3h3l2-4 1 3 3 1 3-4 1 4 3 1 2-4 2 3 3 1 2-3 2 1" stroke="#00f" />
                      <path d="M33 2v6l-4-3zM33 12v6l-4-3z" fill="#00c" />
                    </Icon>
                  </PushButton>
                  <PushButton $edge="#003c74" $span>
                    <Icon w={10} h={18}>
                      <path d="M1 0l9 9-9 9z" fill="#0f0" />
                      <path d="M0.500 0v18" stroke="#808080" />
                    </Icon>
                    Пуск
                  </PushButton>
                  <Rate>20.89</Rate>
                </ControlGrid>
              </Group>
            </Groups>
          </Panel>
        </Body>

        <StatusBar>
          <StatusCell $w={190}>USB Осциллограф не подключен</StatusCell>
          <StatusCell />
          <StatusCell $w={48}>1.7.2</StatusCell>
        </StatusBar>
      </Window>
    </Page>
  );
}
